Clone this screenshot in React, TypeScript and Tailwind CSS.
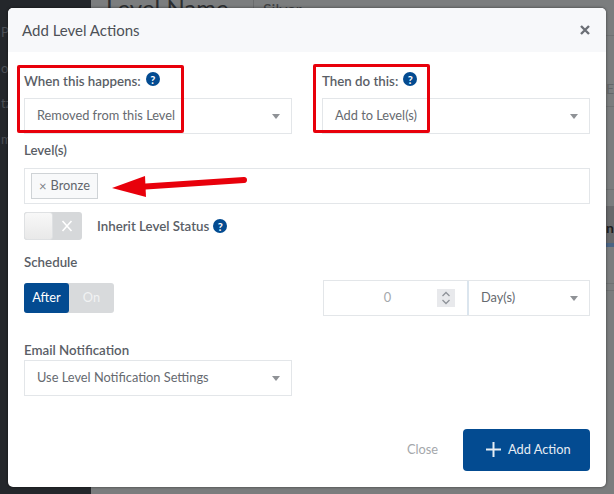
const Help = ({ className }: { className: string }) => (
  <span
    className={`inline-flex h-[14px] w-[14px] items-center justify-center rounded-full bg-[#034b91] text-[11px] font-bold leading-none text-white ${className}`}
  >
    ?
  </span>
);

const Caret = () => <span className="h-0 w-0 border-x-[4px] border-t-[5px] border-x-transparent border-t-[#8f9296]" />;

const Select = ({ value, className }: { value: string; className: string }) => (
  <div className={`flex h-[36px] items-center justify-between border border-[#e3e6e9] bg-white pl-[12px] pr-[11px] text-[#666a70] ${className}`}>
    <span className="mb-[1px]">{value}</span>
    <Caret />
  </div>
);

const Label = ({ children }: { children: React.ReactNode }) => (
  <div className="text-[13.3px] font-semibold leading-[18px] text-[#5a5e66]">{children}</div>
);

export default function App() {
  return (
    <div className="relative h-[494px] w-[614px] overflow-hidden bg-[#7b7d7e] font-['Lato','Noto_Sans',sans-serif] text-[12.8px]">
      {/* page behind the modal */}
      <div className="absolute inset-y-0 left-0 flex w-[91px] flex-col gap-[16px] bg-[#24272b] pt-[23px] text-[13px] text-[#4c5056]">
        <span className="pl-[1px]">Po</span>
        <span className="pl-[1px]">or</span>
        <span className="pl-[1px]">tz</span>
        <span className="pl-[1px]">m</span>
      </div>
      <div className="absolute left-[106px] top-[-4px] text-[24px] leading-none text-[#2c2e30]">Level Name</div>
      <div className="absolute left-[253px] top-0 h-[8px] w-px bg-[#6a6c6d]" />
      <div className="absolute left-[263px] top-[1px] text-[16px] leading-none text-[#3f4143]">Silver</div>
      <div className="absolute left-[606px] top-[78px] text-[14px] text-[#646668]">Er</div>
      <div className="absolute right-0 top-[35px] h-px w-[8px] bg-[#6f7172]" />
      <div className="absolute right-0 top-[106px] h-px w-[8px] bg-[#6f7172]" />
      <div className="absolute right-0 top-[189px] h-px w-[8px] bg-[#6f7172]" />
      <div className="absolute right-0 top-[206px] h-[37px] w-[8px] bg-[#68696b]" />
      <div className="absolute right-0 top-[243px] h-[4px] w-[8px] bg-[#4a6484]" />
      <div className="absolute left-[606px] top-[217px] text-[14px] font-bold text-[#1d1e20]">ne</div>
      <div className="absolute right-0 top-[283px] h-px w-[8px] bg-[#6f7172]" />
      <div className="absolute right-0 top-[290px] h-px w-[8px] bg-[#6f7172]" />

      <div className="absolute left-[8px] top-[8px] flex h-[479px] w-[598px] flex-col rounded-[5px] bg-white shadow-[0_0_3px_rgba(0,0,0,0.55)]">
        <header className="flex h-[44px] items-center justify-between rounded-t-[5px] bg-[#f7f8fa] pl-[14px] pr-[16px]">
          <span className="text-[15px] text-[#4d5157]">Add Level Actions</span>
          <svg width="10" height="10" viewBox="0 0 10 10" className="text-[#6b6f75]">
            <path d="M1 1l8 8M9 1l-8 8" stroke="currentColor" strokeWidth="2.4" />
          </svg>
        </header>

        <div className="flex flex-col px-[16px] pt-[20px]">
          <div className="grid grid-cols-[268px_268px] justify-between gap-x-[30px]">
            <div>
              <div className="flex h-[18px] items-center gap-[5px]">
                <Label>When this happens:</Label>
                <Help className="mb-[4px]" />
              </div>
              <Select value="Removed from this Level" className="mt-[8px]" />
            </div>
            <div>
              <div className="flex h-[18px] items-center gap-[5px]">
                <Label>Then do this:</Label>
                <Help className="mb-[4px]" />
              </div>
              <Select value="Add to Level(s)" className="mt-[8px]" />
            </div>
          </div>

          <div className="mt-[7px]">
            <Label>Level(s)</Label>
          </div>
          <div className="mt-[9px] flex h-[36px] items-center border border-[#e3e6e9] pl-[6px]">
            <span className="flex h-[26px] items-center gap-[4px] border border-[#cfd3d6] bg-[#f8f9fa] px-[7px] text-[#62666c]">
              <span className="text-[13px] leading-none text-[#7c8086]">×</span>Bronze
            </span>
          </div>

          <div className="mt-[8px] flex items-center">
            <div className="flex h-[28px] w-[58px] rounded-[3px] bg-[#d6d8da]">
              <div className="h-full w-[29px] rounded-[3px] border border-[#dfe1e3] bg-gradient-to-b from-[#f8f8f8] to-[#e9e9e9]" />
              <svg width="29" height="28" viewBox="0 0 29 28" className="text-white">
                <path d="M9.5 9l9 10M18.5 9l-9 10" stroke="currentColor" strokeWidth="1.6" />
              </svg>
            </div>
            <span className="ml-[15px] text-[13.3px] font-semibold leading-[18px] text-[#5a5e66]">Inherit Level Status</span>
            <Help className="ml-[4px]" />
          </div>

          <div className="mt-[13px]">
            <Label>Schedule</Label>
          </div>
          <div className="mt-[9px] flex items-center justify-between">
            <div className="flex h-[30px] w-[90px] rounded-[3px] bg-[#d8dadc] text-white">
              <span className="flex w-[45px] items-center justify-center rounded-[3px] bg-[#034b91]">After</span>
              <span className="flex w-[45px] items-center justify-center text-[#f1f2f3]">On</span>
            </div>
            <div className="flex h-[36px] w-[267px] border border-[#e3e6e9]">
              <div className="flex w-[145px] items-center border-r-2 border-[#dbe5ee] pr-[12px]">
                <span className="flex-1 pl-[14px] text-center text-[#a4a8ac]">0</span>
                <span className="flex h-[18px] w-[18px] items-center justify-center bg-[#e8e9ec]">
                  <svg width="10" height="14" viewBox="0 0 10 14" fill="none" stroke="#8f9399" strokeWidth="1.3">
                    <path d="M1.5 5L5 1.5 8.5 5M1.5 9L5 12.5 8.5 9" />
                  </svg>
                </span>
              </div>
              <div className="flex flex-1 items-center justify-between pl-[12px] pr-[11px] text-[#666a70]">
                <span className="mb-[1px]">Day(s)</span>
                <Caret />
              </div>
            </div>
          </div>

          <div className="mt-[25px]">
            <Label>Email Notification</Label>
          </div>
          <Select value="Use Level Notification Settings" className="mt-[1px] w-[268px]" />
        </div>

        <footer className="mt-auto flex items-center justify-end pb-[16px] pr-[16px]">
          <span className="mb-[1px] mr-[25px] text-[#a4a7ab]">Close</span>
          <div className="flex h-[42px] w-[127px] items-center gap-[7px] rounded-[4px] bg-[#034b91] pl-[23px] text-[#e6edf4]">
            <svg width="15" height="15" viewBox="0 0 15 15" className="mb-[1px]">
              <path d="M7.5 0v15M0 7.5h15" stroke="currentColor" strokeWidth="2" />
            </svg>
            <span className="mb-[1px]">Add Action</span>
          </div>
        </footer>
      </div>

      {/* red annotations */}
      <div className="absolute left-[17px] top-[65px] h-[68px] w-[167px] rounded-[2px] border-[3px] border-[#e8000b]" />
      <div className="absolute left-[313px] top-[64px] h-[69px] w-[117px] rounded-[2px] border-[3px] border-[#e8000b]" />
      <svg className="absolute left-[108px] top-[172px]" width="144" height="30" viewBox="0 0 144 30">
        <path d="M136 8L30 15" stroke="#e8000b" strokeWidth="6" strokeLinecap="round" />
        <path d="M4 16L37 4l1 21z" fill="#e8000b" />
      </svg>
    </div>
  );
}
